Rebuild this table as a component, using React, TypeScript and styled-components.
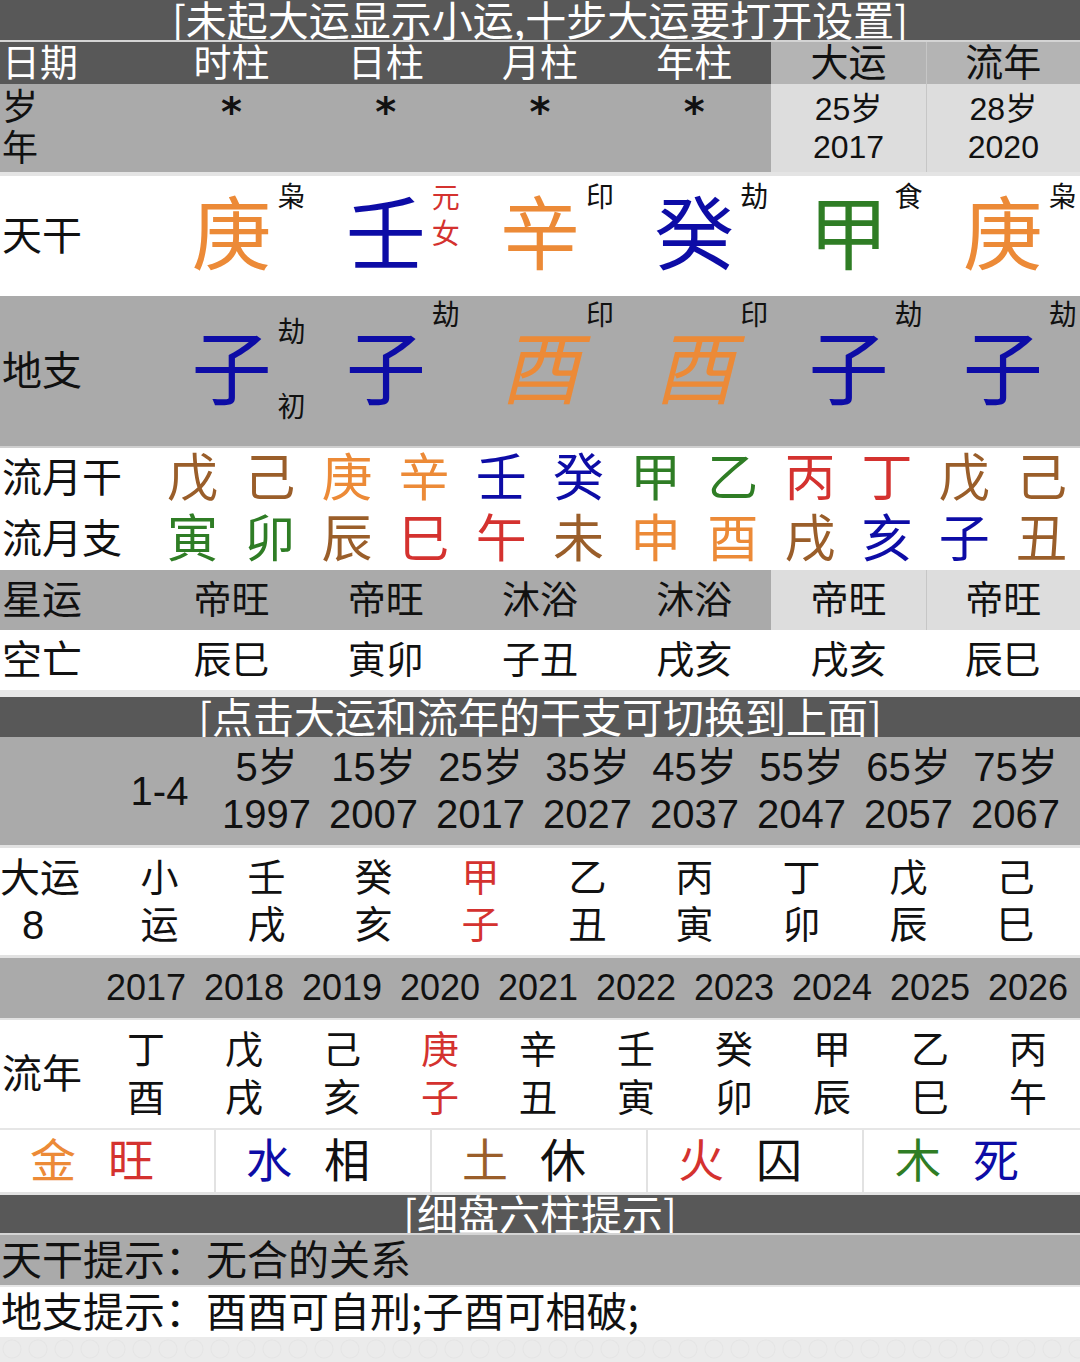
import React from 'react';
import styled, { createGlobalStyle } from 'styled-components';

const C = {
  dark: '#585858',
  gray: '#aaaaaa',
  light: '#dddddd',
  headLight: '#b4b4b4',
  orange: '#ec8a37',
  blue: '#0d0ca6',
  green: '#2f7d25',
  brown: '#9a5e2a',
  red: '#d4322f',
  black: '#111111',
};

const Global = createGlobalStyle`
  html, body { margin: 0; padding: 0; background: #ececec; }
  body {
    font-family: "Liberation Sans", "Noto Sans CJK SC", sans-serif;
    color: #111111;
  }
`;

const Page = styled.div`
  width: 1080px;
  height: 1362px;
  display: flex;
  flex-direction: column;
  overflow: hidden;
  background-color: #ececec;
`;

const Rule = styled.div<{ $h: number; $c?: string }>`
  flex: none;
  height: ${(p) => p.$h}px;
  background: ${(p) => p.$c ?? '#dcdcdc'};
`;

const TitleBar = styled.div<{ $h: number }>`
  flex: none;
  display: flex;
  align-items: flex-start;
  justify-content: center;
  height: ${(p) => p.$h}px;
  background: ${C.dark};
  color: #ffffff;
  font-family: "Noto Sans CJK SC", sans-serif;
  font-size: 41px;
  line-height: ${(p) => p.$h - 4}px;
  white-space: nowrap;
`;

const Grid7 = styled.div<{ $h: number; $bg?: string }>`
  flex: none;
  display: grid;
  grid-template-columns: repeat(7, 1fr);
  grid-template-rows: minmax(0, 1fr);
  height: ${(p) => p.$h}px;
  background: ${(p) => p.$bg ?? '#ffffff'};
`;

const Cell = styled.div<{ $bg?: string; $fg?: string; $sep?: boolean; $left?: boolean; $size?: number }>`
  position: relative;
  display: flex;
  flex-direction: column;
  align-items: ${(p) => (p.$left ? 'flex-start' : 'center')};
  justify-content: center;
  min-height: 0;
  padding-left: ${(p) => (p.$left ? '2px' : '0')};
  background: ${(p) => p.$bg ?? 'transparent'};
  color: ${(p) => p.$fg ?? C.black};
  border-left: ${(p) => (p.$sep ? '1px solid #c6c6c6' : 'none')};
  font-size: ${(p) => p.$size ?? 38}px;
  line-height: 1;
  white-space: nowrap;
`;

const Line = styled.div<{ $lh: number }>`
  line-height: ${(p) => p.$lh}px;
`;

const StarCell = styled(Cell)`
  justify-content: flex-start;
`;

const Star = styled.span`
  font-family: "DejaVu Sans", sans-serif;
  font-weight: 700;
  font-size: 40px;
  line-height: 40px;
  margin-top: 8px;
`;

const BigChar = styled.span<{ $c: string; $slant?: boolean }>`
  font-size: 80px;
  line-height: 80px;
  color: ${(p) => p.$c};
  font-style: ${(p) => (p.$slant ? 'italic' : 'normal')};
`;

const Sup = styled.span<{ $top: number; $c?: string }>`
  position: absolute;
  left: calc(50% + 46px);
  top: ${(p) => p.$top}px;
  font-size: 28px;
  line-height: 28px;
  color: ${(p) => p.$c ?? C.black};
`;

const MonthGrid = styled.div`
  flex: none;
  display: grid;
  grid-template-columns: 154px repeat(12, 1fr);
  grid-template-rows: 61px 61px;
  background: #ffffff;
`;

const MonthLabel = styled.div`
  font-size: 40px;
  line-height: 61px;
  padding-left: 2px;
  white-space: nowrap;
`;

const MonthChar = styled.div<{ $c: string }>`
  font-size: 51px;
  line-height: 61px;
  text-align: center;
  color: ${(p) => p.$c};
`;

const DayunGrid = styled.div<{ $h: number; $bg: string }>`
  flex: none;
  display: grid;
  grid-template-columns: 106px repeat(9, 107px);
  grid-template-rows: minmax(0, 1fr);
  height: ${(p) => p.$h}px;
  background: ${(p) => p.$bg};
`;

const YearGrid = styled.div<{ $h: number; $bg: string }>`
  flex: none;
  display: grid;
  grid-template-columns: 97px repeat(10, 98px);
  grid-template-rows: minmax(0, 1fr);
  height: ${(p) => p.$h}px;
  background: ${(p) => p.$bg};
`;

const LabelStack = styled.div`
  display: flex;
  flex-direction: column;
  justify-content: center;
  font-size: 40px;
  line-height: 47px;
  white-space: nowrap;
`;

const Indented = styled.span`
  padding-left: 22px;
`;

const WuxingRow = styled.div`
  flex: none;
  display: grid;
  grid-template-columns: repeat(5, 1fr);
  grid-template-rows: minmax(0, 1fr);
  height: 62px;
  background: #ffffff;
`;

const WuxingCell = styled.div<{ $last?: boolean }>`
  display: flex;
  align-items: center;
  justify-content: center;
  gap: 32px;
  padding-right: 30px;
  font-size: 46px;
  line-height: 56px;
  border-right: ${(p) => (p.$last ? 'none' : '2px solid #e2e2e2')};
`;

const Tint = styled.span<{ $c: string }>`
  color: ${(p) => p.$c};
`;

const HintRow = styled.div<{ $bg: string }>`
  flex: none;
  height: 50px;
  line-height: 45px;
  font-family: "Noto Sans CJK SC", sans-serif;
  font-size: 41px;
  padding-left: 1px;
  background: ${(p) => p.$bg};
  white-space: nowrap;
`;

const Footer = styled.div`
  flex: 1;
  background-color: #ebebeb;
  background-image: radial-gradient(circle at 12px 12px, transparent 8px, #e4e4e4 9px, transparent 10px);
  background-size: 26px 26px;
`;

type SupT = { t: string; top: number; c?: string };
type Pillar = { ch: string; c: string; slant?: boolean; sups: SupT[] };

const gan: Pillar[] = [
  { ch: '庚', c: C.orange, sups: [{ t: '枭', top: 8 }] },
  { ch: '壬', c: C.blue, sups: [{ t: '元', top: 9, c: C.red }, { t: '女', top: 45, c: C.red }] },
  { ch: '辛', c: C.orange, sups: [{ t: '印', top: 8 }] },
  { ch: '癸', c: C.blue, sups: [{ t: '劫', top: 8 }] },
  { ch: '甲', c: C.green, sups: [{ t: '食', top: 8 }] },
  { ch: '庚', c: C.orange, sups: [{ t: '枭', top: 8 }] },
];

const zhi: Pillar[] = [
  { ch: '子', c: C.blue, sups: [{ t: '劫', top: 23 }, { t: '初', top: 98 }] },
  { ch: '子', c: C.blue, sups: [{ t: '劫', top: 6 }] },
  { ch: '酉', c: C.orange, slant: true, sups: [{ t: '印', top: 6 }] },
  { ch: '酉', c: C.orange, slant: true, sups: [{ t: '印', top: 6 }] },
  { ch: '子', c: C.blue, sups: [{ t: '劫', top: 6 }] },
  { ch: '子', c: C.blue, sups: [{ t: '劫', top: 6 }] },
];

const monthGan: [string, string][] = [
  ['戊', C.brown], ['己', C.brown], ['庚', C.orange], ['辛', C.orange], ['壬', C.blue], ['癸', C.blue],
  ['甲', C.green], ['乙', C.green], ['丙', C.red], ['丁', C.red], ['戊', C.brown], ['己', C.brown],
];
const monthZhi: [string, string][] = [
  ['寅', C.green], ['卯', C.green], ['辰', C.brown], ['巳', C.red], ['午', C.red], ['未', C.brown],
  ['申', C.orange], ['酉', C.orange], ['戌', C.brown], ['亥', C.blue], ['子', C.blue], ['丑', C.brown],
];

const dayunAges = ['5岁', '15岁', '25岁', '35岁', '45岁', '55岁', '65岁', '75岁'];
const dayunYears = ['1997', '2007', '2017', '2027', '2037', '2047', '2057', '2067'];
const dayun: [string, string, boolean][] = [
  ['小', '运', false], ['壬', '戌', false], ['癸', '亥', false], ['甲', '子', true], ['乙', '丑', false],
  ['丙', '寅', false], ['丁', '卯', false], ['戊', '辰', false], ['己', '巳', false],
];
const years = ['2017', '2018', '2019', '2020', '2021', '2022', '2023', '2024', '2025', '2026'];
const liunian: [string, string, boolean][] = [
  ['丁', '酉', false], ['戊', '戌', false], ['己', '亥', false], ['庚', '子', true], ['辛', '丑', false],
  ['壬', '寅', false], ['癸', '卯', false], ['甲', '辰', false], ['乙', '巳', false], ['丙', '午', false],
];
const wuxing: [string, string, string, string][] = [
  ['金', C.orange, '旺', C.red],
  ['水', C.blue, '相', C.black],
  ['土', C.brown, '休', C.black],
  ['火', C.red, '囚', C.black],
  ['木', C.green, '死', C.blue],
];

const PillarRow = ({ label, items, h, bg }: { label: string; items: Pillar[]; h: number; bg: string }) => (
  <Grid7 $h={h} $bg={bg}>
    <Cell $left $size={40}>{label}</Cell>
    {items.map((p, i) => (
      <Cell key={i}>
        <BigChar $c={p.c} $slant={p.slant}>{p.ch}</BigChar>
        {p.sups.map((s, j) => (
          <Sup key={j} $top={s.top} $c={s.c}>{s.t}</Sup>
        ))}
      </Cell>
    ))}
  </Grid7>
);

export default function App() {
  return (
    <Page>
      <Global />
      <TitleBar $h={40}>[未起大运显示小运,十步大运要打开设置]</TitleBar>
      <Rule $h={2} $c="#d4d4d4" />
      <Grid7 $h={42} $bg={C.dark}>
        <Cell $left $fg="#fff">日期</Cell>
        <Cell $fg="#fff">时柱</Cell>
        <Cell $fg="#fff">日柱</Cell>
        <Cell $fg="#fff">月柱</Cell>
        <Cell $fg="#fff">年柱</Cell>
        <Cell $bg={C.headLight}>大运</Cell>
        <Cell $bg={C.headLight} $sep>流年</Cell>
      </Grid7>
      <Grid7 $h={88} $bg={C.gray}>
        <Cell $left $size={36}>
          <Line $lh={41}>岁</Line>
          <Line $lh={41}>年</Line>
        </Cell>
        {[0, 1, 2, 3].map((i) => (
          <StarCell key={i}>
            <Star>*</Star>
          </StarCell>
        ))}
        <Cell $bg={C.light} $size={32}>
          <Line $lh={38}>25岁</Line>
          <Line $lh={38}>2017</Line>
        </Cell>
        <Cell $bg={C.light} $size={32} $sep>
          <Line $lh={38}>28岁</Line>
          <Line $lh={38}>2020</Line>
        </Cell>
      </Grid7>
      <Rule $h={4} $c="#e4e4e4" />
      <PillarRow label="天干" items={gan} h={120} bg="#ffffff" />
      <PillarRow label="地支" items={zhi} h={150} bg={C.gray} />
      <Rule $h={2} $c="#cfcfcf" />
      <MonthGrid>
        <MonthLabel>流月干</MonthLabel>
        {monthGan.map(([ch, c], i) => (
          <MonthChar key={i} $c={c}>{ch}</MonthChar>
        ))}
        <MonthLabel>流月支</MonthLabel>
        {monthZhi.map(([ch, c], i) => (
          <MonthChar key={i} $c={c}>{ch}</MonthChar>
        ))}
      </MonthGrid>
      <Grid7 $h={60} $bg={C.gray}>
        <Cell $left $size={40}>星运</Cell>
        <Cell>帝旺</Cell>
        <Cell>帝旺</Cell>
        <Cell>沐浴</Cell>
        <Cell>沐浴</Cell>
        <Cell $bg={C.light}>帝旺</Cell>
        <Cell $bg={C.light} $sep>帝旺</Cell>
      </Grid7>
      <Grid7 $h={60}>
        <Cell $left $size={40}>空亡</Cell>
        <Cell>辰巳</Cell>
        <Cell>寅卯</Cell>
        <Cell>子丑</Cell>
        <Cell>戌亥</Cell>
        <Cell>戌亥</Cell>
        <Cell>辰巳</Cell>
      </Grid7>
      <Rule $h={7} $c="#e8e8e8" />
      <TitleBar $h={40}>[点击大运和流年的干支可切换到上面]</TitleBar>
      <DayunGrid $h={108} $bg={C.gray}>
        <Cell />
        <Cell $size={40}>1-4</Cell>
        {dayunAges.map((a, i) => (
          <Cell key={i} $size={40}>
            <Line $lh={47}>{a}</Line>
            <Line $lh={47}>{dayunYears[i]}</Line>
          </Cell>
        ))}
      </DayunGrid>
      <Rule $h={3} $c="#e2e2e2" />
      <DayunGrid $h={107} $bg="#ffffff">
        <LabelStack>
          <span>大运</span>
          <Indented>8</Indented>
        </LabelStack>
        {dayun.map(([a, b, hot], i) => (
          <Cell key={i} $size={38} $fg={hot ? C.red : C.black}>
            <Line $lh={47}>{a}</Line>
            <Line $lh={47}>{b}</Line>
          </Cell>
        ))}
      </DayunGrid>
      <Rule $h={3} $c="#e2e2e2" />
      <YearGrid $h={60} $bg={C.gray}>
        <Cell />
        {years.map((y) => (
          <Cell key={y} $size={36}>{y}</Cell>
        ))}
      </YearGrid>
      <Rule $h={2} $c="#e2e2e2" />
      <YearGrid $h={108} $bg="#ffffff">
        <Cell $left $size={40}>流年</Cell>
        {liunian.map(([a, b, hot], i) => (
          <Cell key={i} $size={38} $fg={hot ? C.red : C.black}>
            <Line $lh={48}>{a}</Line>
            <Line $lh={48}>{b}</Line>
          </Cell>
        ))}
      </YearGrid>
      <Rule $h={2} $c="#e6e6e6" />
      <WuxingRow>
        {wuxing.map(([e, ec, s, sc], i) => (
          <WuxingCell key={i} $last={i === wuxing.length - 1}>
            <Tint $c={ec}>{e}</Tint>
            <Tint $c={sc}>{s}</Tint>
          </WuxingCell>
        ))}
      </WuxingRow>
      <Rule $h={3} $c="#e2e2e2" />
      <TitleBar $h={38}>[细盘六柱提示]</TitleBar>
      <Rule $h={2} $c="#d4d4d4" />
      <HintRow $bg={C.gray}>天干提示：无合的关系</HintRow>
      <Rule $h={2} $c="#e6e6e6" />
      <HintRow $bg="#ffffff">地支提示：酉酉可自刑;子酉可相破;</HintRow>
      <Footer />
    </Page>
  );
}
